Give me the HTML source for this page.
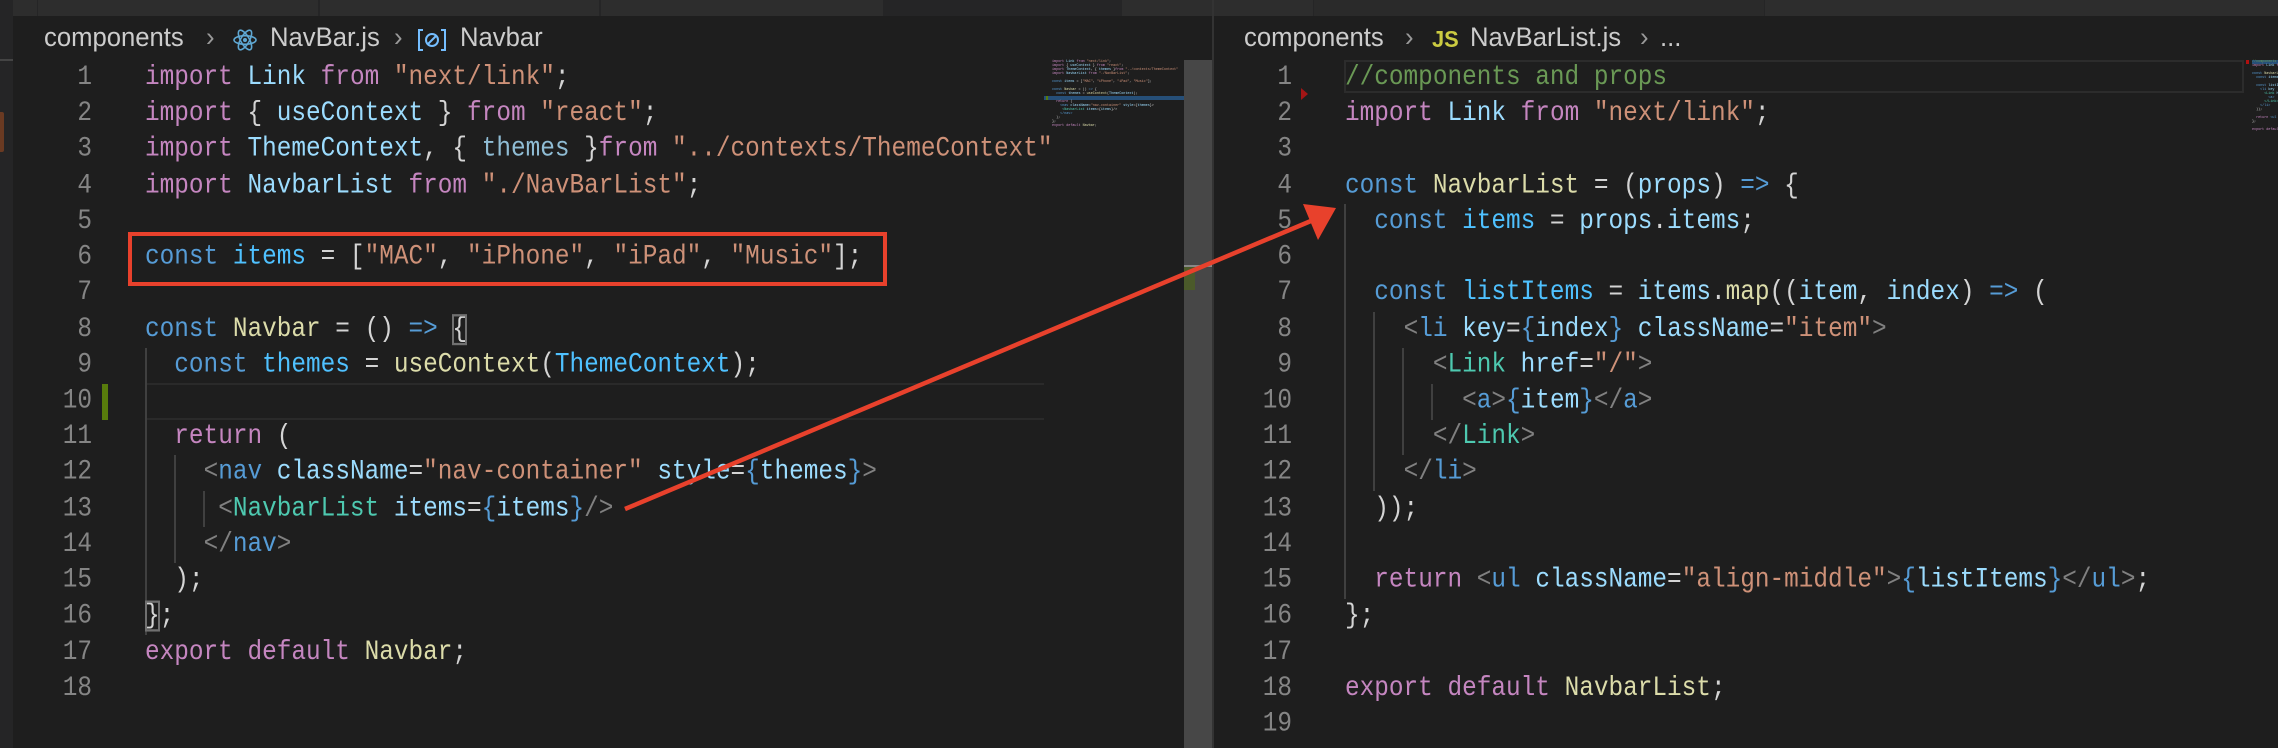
<!DOCTYPE html>
<html><head><meta charset="utf-8">
<style>
*{margin:0;padding:0;box-sizing:border-box}
body{width:2278px;height:748px;background:#1e1e1e;position:relative;overflow:hidden;font-family:"Liberation Mono",monospace}
.abs{position:absolute}
.code,.nums{position:absolute;top:60px;font-family:"Liberation Mono",monospace;font-size:24.4px;line-height:31.22px;white-space:pre;transform:scaleY(1.15);transform-origin:0 0}
.code{color:#d4d4d4}
.nums{color:#858585;text-align:right}
.k{color:#c586c0}.c{color:#569cd6}.v{color:#9cdcfe}.s{color:#ce9178}.f{color:#dcdcaa}.t{color:#4ec9b0}.g{color:#808080}.m{color:#6a9955}
.bc{position:absolute;top:22px;font-family:"Liberation Sans",sans-serif;font-size:27px;color:#cccccc;white-space:pre;transform:scaleX(0.95);transform-origin:0 0}
.guide{position:absolute;width:2px;background:#404040}
.mini{position:absolute;top:60px;font-family:"Liberation Mono",monospace;font-size:3.4px;line-height:4px;white-space:pre;color:#d4d4d4}
.box{outline:2px solid #707070;outline-offset:-2px}
</style></head><body>
<div class="abs" style="left:0;top:0;width:2278px;height:16px;background:#252526"></div>
<div class="abs" style="left:13px;top:0;width:24px;height:16px;background:#2d2d2d"></div>
<div class="abs" style="left:38px;top:0;width:280px;height:16px;background:#2d2d2d"></div>
<div class="abs" style="left:320px;top:0;width:279px;height:16px;background:#2d2d2d"></div>
<div class="abs" style="left:601px;top:0;width:282px;height:16px;background:#2d2d2d"></div>
<div class="abs" style="left:1122px;top:0;width:90px;height:16px;background:#2d2d2d"></div>
<div class="abs" style="left:1213px;top:0;width:100px;height:16px;background:#2d2d2d"></div>
<div class="abs" style="left:1314px;top:0;width:450px;height:16px;background:#2a2a2a"></div>
<div class="abs" style="left:1765px;top:0;width:513px;height:16px;background:#2d2d2d"></div>
<div class="abs" style="left:0;top:16px;width:13px;height:732px;background:#252526"></div>
<div class="abs" style="left:0;top:59px;width:13px;height:2px;background:#444"></div>
<div class="abs" style="left:0;top:112px;width:4px;height:40px;background:#6a3a22;border-radius:0 2px 2px 0"></div>
<div class="abs" style="left:1212px;top:0;width:2px;height:748px;background:#333"></div>

<div class="bc" style="left:44px">components</div>
<div class="bc" style="left:206px;color:#999">›</div>
<svg class="abs" style="left:232px;top:26px" width="26" height="28" viewBox="0 0 26 28"><g fill="none" stroke="#5fa8d3" stroke-width="1.6"><ellipse cx="13" cy="14" rx="11" ry="4.3"/><ellipse cx="13" cy="14" rx="11" ry="4.3" transform="rotate(60 13 14)"/><ellipse cx="13" cy="14" rx="11" ry="4.3" transform="rotate(120 13 14)"/></g><circle cx="13" cy="14" r="2" fill="#5fa8d3"/></svg>
<div class="bc" style="left:270px">NavBar.js</div>
<div class="bc" style="left:394px;color:#999">›</div>
<svg class="abs" style="left:416px;top:27px" width="32" height="26" viewBox="0 0 32 26"><g fill="none" stroke="#75beff" stroke-width="2"><path d="M7 3H3v20h4M25 3h4v20h-4"/><circle cx="16" cy="13" r="6"/><path d="M12 17l8-8"/></g></svg>
<div class="bc" style="left:460px">Navbar</div>

<div class="bc" style="left:1244px">components</div>
<div class="bc" style="left:1405px;color:#999">›</div>
<div class="bc" style="left:1432px;color:#cbcb41;font-weight:bold;font-size:23px;top:26px">JS</div>
<div class="bc" style="left:1470px">NavBarList.js</div>
<div class="bc" style="left:1640px;color:#999">›</div>
<div class="bc" style="left:1660px">...</div>

<div class="abs" style="left:145px;top:383px;width:899px;height:37px;border-top:2px solid #2a2a2a;border-bottom:2px solid #2a2a2a"></div>
<div class="abs" style="left:102px;top:384px;width:6px;height:36px;background:#587c0c"></div>

<div class="guide" style="left:145px;top:348px;height:287px"></div>
<div class="guide" style="left:174px;top:455px;height:108px"></div>
<div class="guide" style="left:203px;top:491px;height:36px"></div>

<div class="nums" style="left:40px;width:52px">1
2
3
4
5
6
7
8
9
10
11
12
13
14
15
16
17
18</div>
<div class="code" style="left:145px"><span class="k">import</span> <span class="v">Link</span> <span class="k">from</span> <span class="s">"next/link"</span>;
<span class="k">import</span> { <span class="v">useContext</span> } <span class="k">from</span> <span class="s">"react"</span>;
<span class="k">import</span> <span class="v">ThemeContext</span>, { <span class="v" style="color:#8fbcd4">themes</span> }<span class="k">from</span> <span class="s">"../contexts/ThemeContext"</span>
<span class="k">import</span> <span class="v">NavbarList</span> <span class="k">from</span> <span class="s">"./NavBarList"</span>;

<span class="c">const</span> <span class="v" style="color:#4fc1ff">items</span> = [<span class="s">"MAC"</span>, <span class="s">"iPhone"</span>, <span class="s">"iPad"</span>, <span class="s">"Music"</span>];

<span class="c">const</span> <span class="f">Navbar</span> = () <span class="c">=&gt;</span> <span class="box">{</span>
  <span class="c">const</span> <span class="v" style="color:#4fc1ff">themes</span> = <span class="f">useContext</span>(<span class="v" style="color:#4fc1ff">ThemeContext</span>);

  <span class="k">return</span> (
    <span class="g">&lt;</span><span class="c">nav</span> <span class="v">className</span>=<span class="s">"nav-container"</span> <span class="v">style</span>=<span class="c">{</span><span class="v">themes</span><span class="c">}</span><span class="g">&gt;</span>
     <span class="g">&lt;</span><span class="t">NavbarList</span> <span class="v">items</span>=<span class="c">{</span><span class="v">items</span><span class="c">}</span><span class="g">/&gt;</span>
    <span class="g">&lt;/</span><span class="c">nav</span><span class="g">&gt;</span>
  );
<span class="box">}</span>;
<span class="k">export</span> <span class="k">default</span> <span class="f">Navbar</span>;
</div>

<div class="abs" style="left:128px;top:232px;width:759px;height:54px;border:4px solid #e8412c"></div>

<div class="abs" style="left:1044px;top:96px;width:140px;height:4px;background:#264f78"></div>
<div class="abs" style="left:1046px;top:96px;width:2px;height:4px;background:#587c0c"></div>
<div class="mini" style="left:1052px"><span class="k">import</span> <span class="v">Link</span> <span class="k">from</span> <span class="s">"next/link"</span>;
<span class="k">import</span> { <span class="v">useContext</span> } <span class="k">from</span> <span class="s">"react"</span>;
<span class="k">import</span> <span class="v">ThemeContext</span>, { <span class="v">themes</span> }<span class="k">from</span> <span class="s">"../contexts/ThemeContext"</span>
<span class="k">import</span> <span class="v">NavbarList</span> <span class="k">from</span> <span class="s">"./NavBarList"</span>;

<span class="c">const</span> <span class="v">items</span> = [<span class="s">"MAC"</span>, <span class="s">"iPhone"</span>, <span class="s">"iPad"</span>, <span class="s">"Music"</span>];

<span class="c">const</span> <span class="f">Navbar</span> = () <span class="c">=&gt;</span> {
  <span class="c">const</span> <span class="v">themes</span> = <span class="f">useContext</span>(<span class="v">ThemeContext</span>);

  <span class="k">return</span> (
    <span class="c">&lt;nav</span> <span class="v">className</span>=<span class="s">"nav-container"</span> <span class="v">style</span>={<span class="v">themes</span>}&gt;
     <span class="t">&lt;NavbarList</span> <span class="v">items</span>={<span class="v">items</span>}/&gt;
    <span class="c">&lt;/nav&gt;</span>
  );
};
<span class="k">export</span> <span class="k">default</span> <span class="f">Navbar</span>;</div>
<div class="abs" style="left:1184px;top:60px;width:28px;height:688px;background:#474747"></div>
<div class="abs" style="left:1184px;top:265px;width:28px;height:2px;background:#888"></div>
<div class="abs" style="left:1184px;top:267px;width:11px;height:23px;background:#4b5a2a"></div>

<div class="abs" style="left:1344px;top:60px;width:900px;height:33px;border:2px solid #2c2c2c"></div>
<div class="abs" style="left:1301px;top:88px;width:0;height:0;border-top:6px solid transparent;border-bottom:6px solid transparent;border-left:7px solid #a31515"></div>
<div class="guide" style="left:1344px;top:204px;height:395px"></div>
<div class="guide" style="left:1373px;top:312px;height:179px"></div>
<div class="guide" style="left:1402px;top:348px;height:107px"></div>
<div class="guide" style="left:1431px;top:384px;height:36px"></div>

<div class="nums" style="left:1240px;width:52px">1
2
3
4
5
6
7
8
9
10
11
12
13
14
15
16
17
18
19</div>
<div class="code" style="left:1345px"><span class="m">//components and props</span>
<span class="k">import</span> <span class="v">Link</span> <span class="k">from</span> <span class="s">"next/link"</span>;

<span class="c">const</span> <span class="f">NavbarList</span> = (<span class="v">props</span>) <span class="c">=&gt;</span> {
  <span class="c">const</span> <span class="v" style="color:#4fc1ff">items</span> = <span class="v">props</span>.<span class="v">items</span>;

  <span class="c">const</span> <span class="v" style="color:#4fc1ff">listItems</span> = <span class="v">items</span>.<span class="f">map</span>((<span class="v">item</span>, <span class="v">index</span>) <span class="c">=&gt;</span> (
    <span class="g">&lt;</span><span class="c">li</span> <span class="v">key</span>=<span class="c">{</span><span class="v">index</span><span class="c">}</span> <span class="v">className</span>=<span class="s">"item"</span><span class="g">&gt;</span>
      <span class="g">&lt;</span><span class="t">Link</span> <span class="v">href</span>=<span class="s">"/"</span><span class="g">&gt;</span>
        <span class="g">&lt;</span><span class="c">a</span><span class="g">&gt;</span><span class="c">{</span><span class="v">item</span><span class="c">}</span><span class="g">&lt;/</span><span class="c">a</span><span class="g">&gt;</span>
      <span class="g">&lt;/</span><span class="t">Link</span><span class="g">&gt;</span>
    <span class="g">&lt;/</span><span class="c">li</span><span class="g">&gt;</span>
  ));

  <span class="k">return</span> <span class="g">&lt;</span><span class="c">ul</span> <span class="v">className</span>=<span class="s">"align-middle"</span><span class="g">&gt;</span><span class="c">{</span><span class="v">listItems</span><span class="c">}</span><span class="g">&lt;/</span><span class="c">ul</span><span class="g">&gt;</span>;
};

<span class="k">export</span> <span class="k">default</span> <span class="f">NavbarList</span>;
</div>

<div class="abs" style="left:2246px;top:60px;width:3px;height:4px;background:#b01010"></div>
<div class="abs" style="left:2252px;top:60px;width:26px;height:4px;background:#264f78"></div>
<div class="mini" style="left:2252px"><span class="m">//components and props</span>
<span class="k">import</span> <span class="v">Link</span> <span class="k">from</span>

<span class="c">const</span> <span class="f">NavbarList</span>
  <span class="c">const</span> <span class="v">items</span>

  <span class="c">const</span> <span class="v">listItems</span>
    <span class="c">&lt;li</span> <span class="v">key</span>
      <span class="t">&lt;Link</span> <span class="v">h</span>
        <span class="c">&lt;a&gt;</span>
      <span class="t">&lt;/Link&gt;</span>
    <span class="c">&lt;/li&gt;</span>
  ));

  <span class="k">return</span> <span class="c">&lt;ul</span>
};

<span class="k">export</span> <span class="k">default</span></div>

<svg class="abs" style="left:0;top:0" width="2278" height="748" viewBox="0 0 2278 748">
<line x1="625" y1="509" x2="1318" y2="218" stroke="#e8412c" stroke-width="4.5"/>
<polygon points="1336,208 1303,204 1318,240" fill="#e8412c"/>
</svg>
</body></html>
